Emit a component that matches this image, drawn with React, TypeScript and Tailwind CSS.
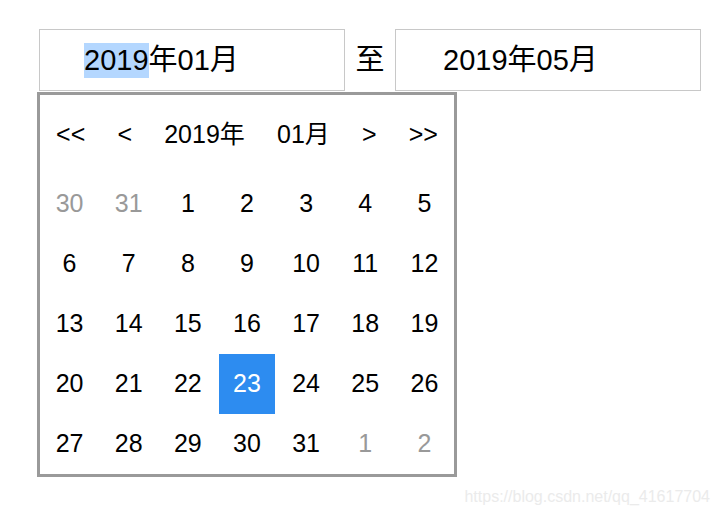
const font = { fontFamily: '"Liberation Sans", Arial, "Noto Sans CJK SC", sans-serif' };

interface Day {
  label: number;
  muted?: boolean;
  selected?: boolean;
}

const weeks: Day[][] = [
  [{ label: 30, muted: true }, { label: 31, muted: true }, { label: 1 }, { label: 2 }, { label: 3 }, { label: 4 }, { label: 5 }],
  [6, 7, 8, 9, 10, 11, 12].map((n) => ({ label: n })),
  [13, 14, 15, 16, 17, 18, 19].map((n) => ({ label: n })),
  [20, 21, 22, 23, 24, 25, 26].map((n) => ({ label: n, selected: n === 23 })),
  [{ label: 27 }, { label: 28 }, { label: 29 }, { label: 30 }, { label: 31 }, { label: 1, muted: true }, { label: 2, muted: true }],
];

function RangeInputs() {
  return (
    <div className="flex items-center text-[29px] text-black">
      <div className="w-[306px] h-[62px] border border-[#c8c8c8] flex items-center pl-[44px]">
        <span className="bg-[#b4d7ff] leading-[35px]">2019</span>
        <span className="leading-[35px]">年01月</span>
      </div>
      <span className="w-[50px] text-center leading-[35px]">至</span>
      <div className="w-[306px] h-[62px] border border-[#c8c8c8] flex items-center pl-[47px]">
        <span className="leading-[35px]">2019年05月</span>
      </div>
    </div>
  );
}

function Calendar() {
  return (
    <div className="w-[420px] border-[3px] border-[#9a9a9a] ml-[-2px] mt-[1px] text-[25px] text-black">
      <div className="h-[79px] flex items-center justify-around">
        <span>&lt;&lt;</span>
        <span>&lt;</span>
        <span>2019年</span>
        <span>01月</span>
        <span>&gt;</span>
        <span>&gt;&gt;</span>
      </div>
      {weeks.map((week, i) => (
        <div key={i} className="grid grid-cols-7 h-[60px]">
          {week.map((day, j) => (
            <div key={j} className="flex items-center justify-center">
              <span
                className={`w-[56px] h-[60px] flex items-center justify-center ${
                  day.selected
                    ? 'bg-[#2d8cf0] text-white'
                    : day.muted
                    ? 'text-[#999999]'
                    : 'text-black'
                }`}
              >
                {day.label}
              </span>
            </div>
          ))}
        </div>
      ))}
    </div>
  );
}

export default function App() {
  return (
    <div className="relative w-[722px] h-[516px] bg-white pt-[29px] pl-[39px]" style={font}>
      <RangeInputs />
      <Calendar />
      {/* CSDN watermark */}
      <span className="absolute right-[12px] bottom-[7px] text-[16px] text-[#ebebeb]">
        https://blog.csdn.net/qq_41617704
      </span>
    </div>
  );
}
